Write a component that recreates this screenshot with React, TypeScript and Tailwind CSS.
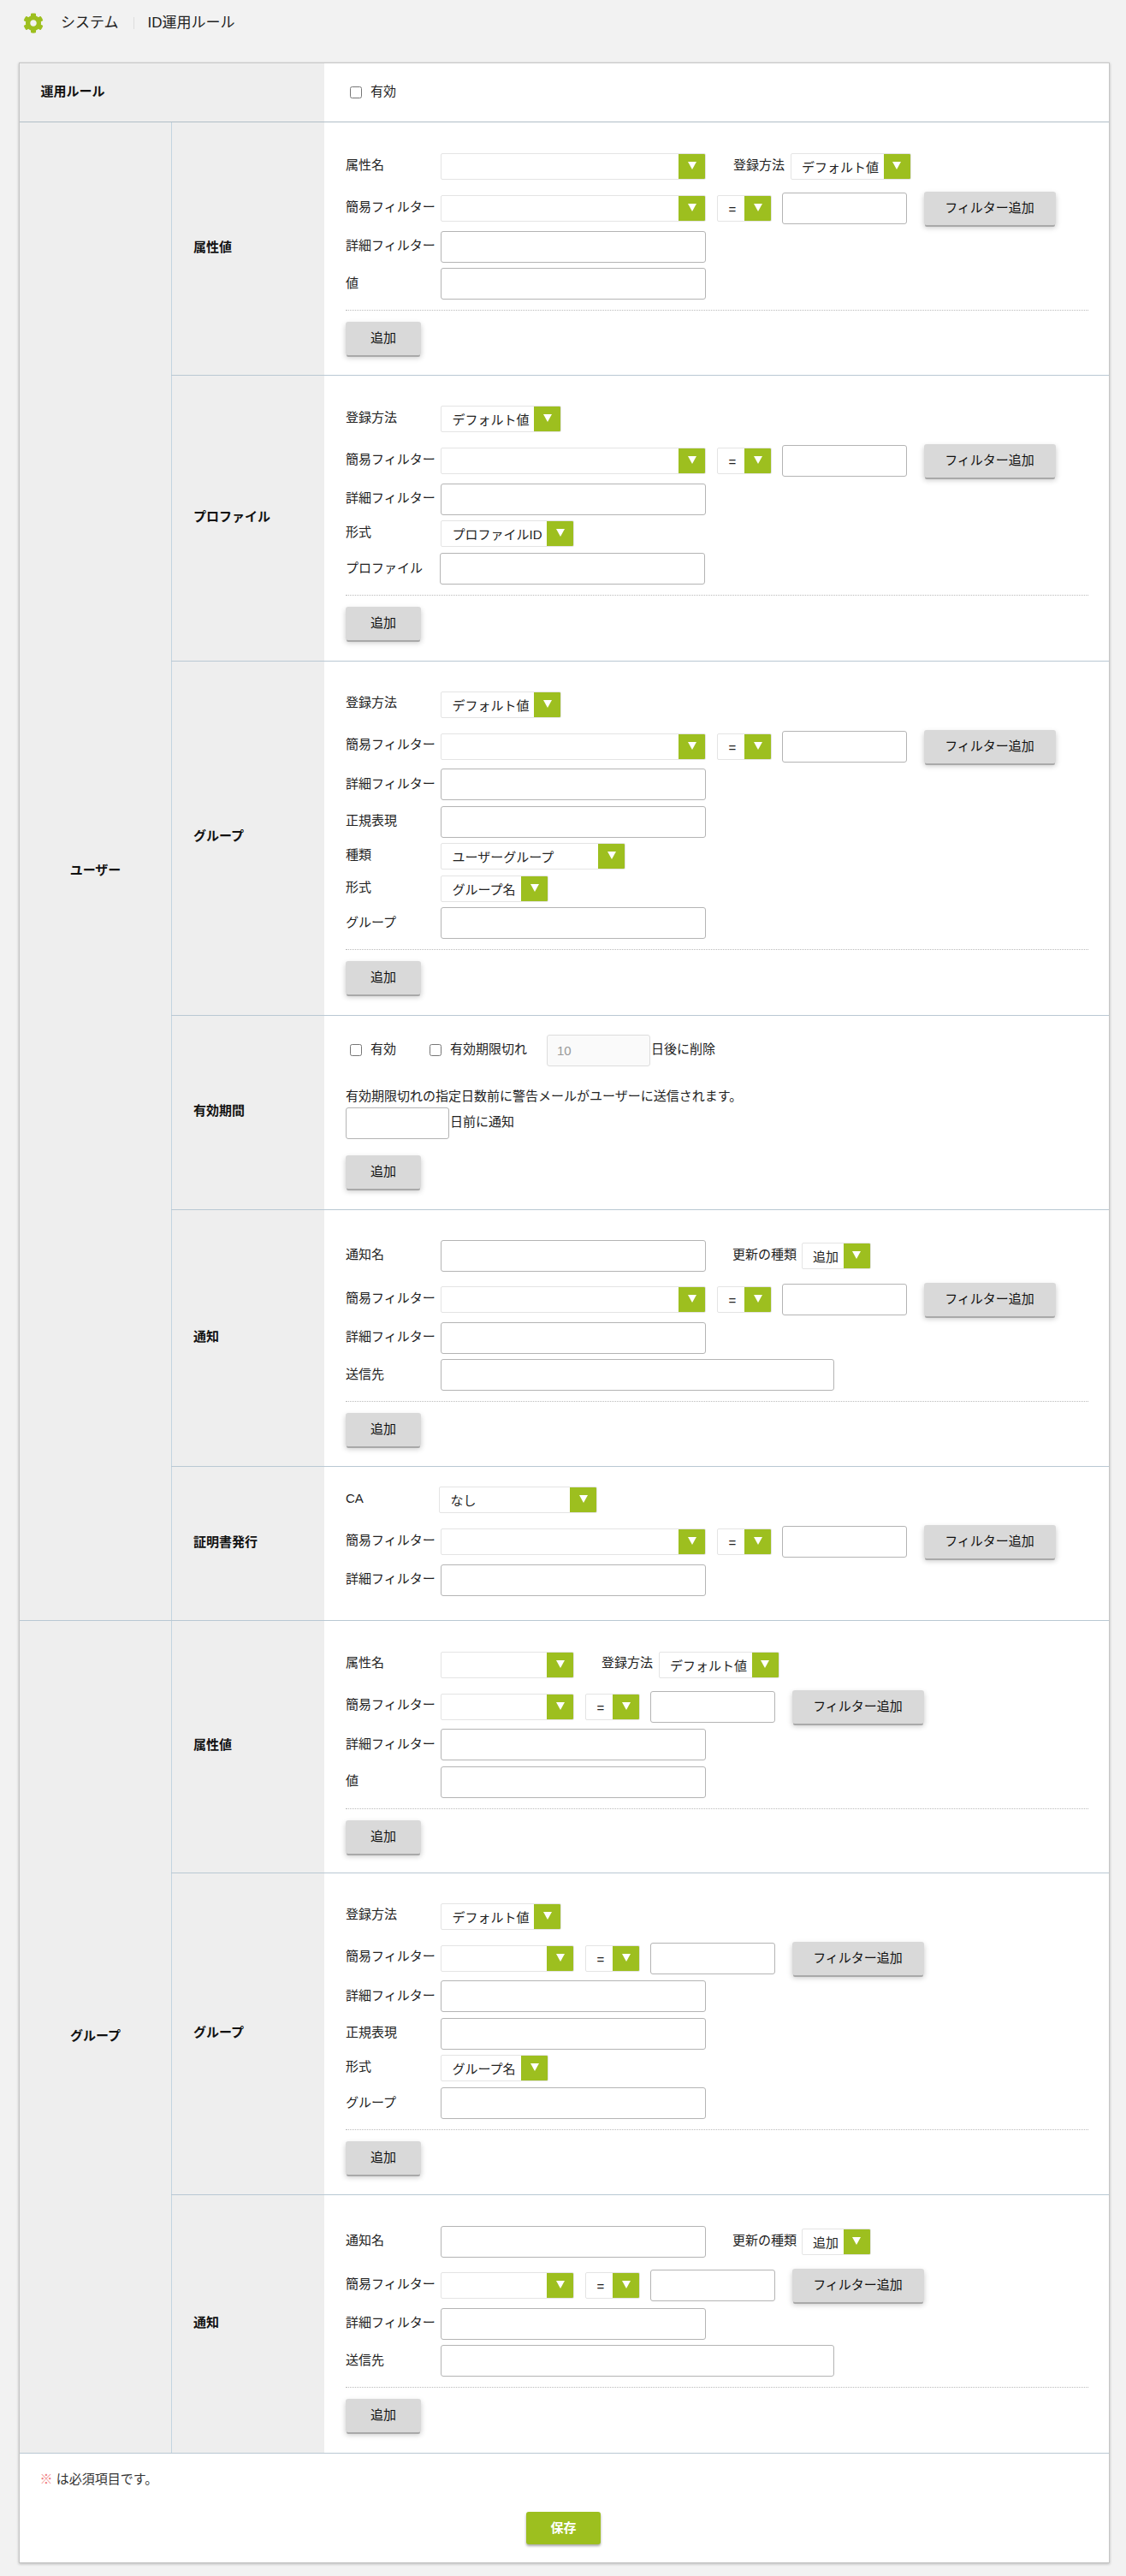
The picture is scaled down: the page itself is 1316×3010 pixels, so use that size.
import React from 'react';
import { FaCog } from 'react-icons/fa';

const inputClass = 'h-[37px] border border-[#b4b4b4] rounded-[3px] bg-white px-2 text-[15px] outline-none';

const Select: React.FC<{ className: string; text?: string }> = ({ className, text }) => (
  <div className={`flex h-[31px] shrink-0 overflow-hidden rounded-[2px] border border-[#e4e4e4] bg-white ${className}`}>
    <span className="flex-1 pl-[12.5px] pt-[1px] text-[15px] leading-[29px] whitespace-nowrap text-[#222]">{text}</span>
    <span className="flex w-[31px] shrink-0 justify-center bg-[#9dbf1f] pt-[9px]">
      <svg width="10" height="9" viewBox="0 0 10 9">
        <polygon points="0,0 10,0 5,9" fill="#fff" />
      </svg>
    </span>
  </div>
);

const GrayButton: React.FC<{ className?: string; children: React.ReactNode }> = ({ className = 'w-[88px]', children }) => (
  <button
    type="button"
    className={`h-[39px] shrink-0 rounded-[3px] bg-[#d9d9d9] text-center text-[15px] text-[#111] shadow-[0_3px_0_-1px_#a9a9a9,0_3px_6px_rgba(0,0,0,0.22)] ${className}`}
  >
    {children}
  </button>
);

const Row: React.FC<{
  label: string;
  className?: string;
  labelClass?: string;
  labelPad?: string;
  children: React.ReactNode;
}> = ({ label, className = '', labelClass = 'w-[111px]', labelPad = 'pb-[3px]', children }) => (
  <div className={`flex items-center ${className}`}>
    <span className={`shrink-0 text-[15px] whitespace-nowrap text-[#222] ${labelPad} ${labelClass}`}>{label}</span>
    {children}
  </div>
);

const TextRow: React.FC<{ label: string; className?: string; labelClass?: string; inputWidth?: string }> = ({
  label,
  className = 'mb-[6.5px]',
  labelClass,
  inputWidth = 'w-[310px]',
}) => (
  <Row label={label} className={className} labelClass={labelClass} labelPad="pb-[1px]">
    <input className={`${inputClass} ${inputWidth}`} />
  </Row>
);

const FilterRow: React.FC<{ narrow?: boolean }> = ({ narrow }) => (
  <Row label="簡易フィルター" className="mb-[7.5px] h-[37px]">
    <Select className={narrow ? 'w-[156px]' : 'w-[310px]'} />
    <Select className="ml-[13px] w-[64px]" text="=" />
    <input className={`${inputClass} ml-[12px] w-[146px]`} />
    <GrayButton className="ml-[19.5px] w-[154px]">フィルター追加</GrayButton>
  </Row>
);

const AddFooter: React.FC = () => (
  <>
    <div className="mt-[12px] mb-[13px] border-t border-dotted border-[#bbbbbb]" />
    <GrayButton>追加</GrayButton>
  </>
);

const SubRow: React.FC<{ label: string; first?: boolean; className: string; children: React.ReactNode }> = ({
  label,
  first,
  className,
  children,
}) => (
  <div className={`flex ${first ? '' : 'border-t border-[#b9c8d3]'}`}>
    <div className="flex w-[179px] shrink-0 items-center border-l border-[#c3d4e0] bg-[#eeeeee] pb-[3px] pl-[25px] text-[15px] font-bold text-[#111]">
      {label}
    </div>
    <div className={`min-w-0 flex-1 bg-white pr-[24px] pl-[25px] ${className}`}>{children}</div>
  </div>
);

const Check: React.FC<{ label: string; className?: string }> = ({ label, className = '' }) => (
  <label className={`flex items-center text-[15px] text-[#222] ${className}`}>
    <input type="checkbox" className="mr-[10px] h-[14px] w-[14px]" />
    <span className="pb-[2px]">{label}</span>
  </label>
);

const Attribute: React.FC<{ narrow?: boolean }> = ({ narrow }) => (
  <>
    <Row label="属性名" className="mb-[15px]">
      <Select className={narrow ? 'w-[156px]' : 'w-[310px]'} />
      <span className="ml-[32px] w-[60px] shrink-0 pb-[3px] text-[15px] whitespace-nowrap text-[#222]">登録方法</span>
      <Select className="ml-[6.5px] w-[141px]" text="デフォルト値" />
    </Row>
    <FilterRow narrow={narrow} />
    <TextRow label="詳細フィルター" />
    <TextRow label="値" className="" />
    <AddFooter />
  </>
);

const Notice: React.FC<{ narrow?: boolean }> = ({ narrow }) => (
  <>
    <Row label="通知名" className="mb-[14px]">
      <input className={`${inputClass} w-[310px]`} />
      <span className="ml-[31px] w-[74px] shrink-0 pb-[3px] text-[15px] whitespace-nowrap text-[#222]">更新の種類</span>
      <Select className="ml-[6.5px] w-[81px]" text="追加" />
    </Row>
    <FilterRow narrow={narrow} />
    <TextRow label="詳細フィルター" />
    <TextRow label="送信先" className="" inputWidth="w-[460px]" />
    <AddFooter />
  </>
);

export default function App() {
  return (
    <div className="min-h-[3010px] bg-[#f2f2f2] pb-[16px] font-['Liberation_Sans','Noto_Sans_CJK_JP',sans-serif]">
      {/* Page Header */}
      <div className="flex h-[73px] items-start pt-[15px] pl-[27px] text-[17px] text-[#222]">
        <FaCog className="h-[24px] w-[24px] text-[#9dbf1f]" />
        <span className="ml-[20px] leading-[24px]">システム</span>
        <span className="mt-[5px] ml-[17px] h-[14px] border-l border-[#dddddd]" />
        <span className="ml-[16px] leading-[24px]">ID運用ルール</span>
      </div>

      <div className="mx-[22px] w-[1275px] border border-[#c6c6c6] bg-white shadow-[0_1px_3px_rgba(0,0,0,0.25)]">
        {/* 運用ルール */}
        <div className="flex h-[69px] border-b border-[#b0bec7]">
          <div className="flex w-[356px] items-center bg-[#eeeeee] pb-[2px] pl-[24.5px] text-[15px] font-bold text-[#111]">
            運用ルール
          </div>
          <div className="flex items-center pl-[30px]">
            <Check label="有効" />
          </div>
        </div>

        {/* ユーザー */}
        <div className="flex">
          <div className="flex w-[177px] shrink-0 items-center justify-center bg-[#eeeeee] pb-[2px] text-[15px] font-bold text-[#111]">
            ユーザー
          </div>
          <div className="min-w-0 flex-1">
            <SubRow label="属性値" first className="pt-[36px] pb-[23px]">
              <Attribute />
            </SubRow>

            <SubRow label="プロファイル" className="pt-[35px] pb-[23.5px]">
              <Row label="登録方法" className="mb-[15px]">
                <Select className="w-[141px]" text="デフォルト値" />
              </Row>
              <FilterRow />
              <TextRow label="詳細フィルター" />
              <Row label="形式" className="mb-[7px]">
                <Select className="w-[156px]" text="プロファイルID" />
              </Row>
              <TextRow label="プロファイル" className="" labelClass="w-[110px]" />
              <AddFooter />
            </SubRow>

            <SubRow label="グループ" className="pt-[35px] pb-[23.5px]">
              <Row label="登録方法" className="mb-[15px]">
                <Select className="w-[141px]" text="デフォルト値" />
              </Row>
              <FilterRow />
              <TextRow label="詳細フィルター" />
              <TextRow label="正規表現" />
              <Row label="種類" className="mb-[7px]">
                <Select className="w-[216px]" text="ユーザーグループ" />
              </Row>
              <Row label="形式" className="mb-[6px]">
                <Select className="w-[126px]" text="グループ名" />
              </Row>
              <TextRow label="グループ" className="" />
              <AddFooter />
            </SubRow>

            <SubRow label="有効期間" className="pt-[22px] pb-[24.5px]">
              <div className="flex h-[37px] items-center text-[15px] text-[#222]">
                <Check label="有効" className="ml-[5px]" />
                <Check label="有効期限切れ" className="ml-[39px]" />
                <input
                  disabled
                  defaultValue="10"
                  className="ml-[23px] h-[37px] w-[121px] rounded-[3px] border border-[#dddddd] bg-[#fafafa] px-[11px] text-[15px] text-[#999999]"
                />
                <span className="ml-[1px] pb-[2px]">日後に削除</span>
              </div>
              <p className="mt-[24px] text-[15px] leading-[22px] text-[#222]">
                有効期限切れの指定日数前に警告メールがユーザーに送信されます。
              </p>
              <div className="mt-[2px] flex items-center text-[15px] text-[#222]">
                <input className={`${inputClass} w-[121px]`} />
                <span className="ml-[1px] pb-[2px]">日前に通知</span>
              </div>
              <div className="mt-[19px]">
                <GrayButton>追加</GrayButton>
              </div>
            </SubRow>

            <SubRow label="通知" className="pt-[35px] pb-[23px]">
              <Notice />
            </SubRow>

            <SubRow label="証明書発行" className="pt-[23px] pb-[28px]">
              <Row label="CA" className="mb-[15px]" labelClass="w-[109px]">
                <Select className="w-[185px]" text="なし" />
              </Row>
              <FilterRow />
              <TextRow label="詳細フィルター" className="" />
            </SubRow>
          </div>
        </div>

        {/* グループ */}
        <div className="flex border-t border-[#b9c8d3]">
          <div className="flex w-[177px] shrink-0 items-center justify-center bg-[#eeeeee] pb-[2px] text-[15px] font-bold text-[#111]">
            グループ
          </div>
          <div className="min-w-0 flex-1">
            <SubRow label="属性値" first className="pt-[36px] pb-[22px]">
              <Attribute narrow />
            </SubRow>

            <SubRow label="グループ" className="pt-[35px] pb-[23px]">
              <Row label="登録方法" className="mb-[15px]">
                <Select className="w-[141px]" text="デフォルト値" />
              </Row>
              <FilterRow narrow />
              <TextRow label="詳細フィルター" />
              <TextRow label="正規表現" />
              <Row label="形式" className="mb-[7px]">
                <Select className="w-[126px]" text="グループ名" />
              </Row>
              <TextRow label="グループ" className="" />
              <AddFooter />
            </SubRow>

            <SubRow label="通知" className="pt-[36px] pb-[24px]">
              <Notice narrow />
            </SubRow>
          </div>
        </div>

        {/* Footer */}
        <div className="border-t border-[#b9c8d3] pt-[20px] pb-[21px]">
          <p className="pl-[23.5px] text-[15px] leading-[20px] text-[#333333]">
            <span className="text-[#f08080]">※</span> は必須項目です。
          </p>
          <div className="mt-[28px] flex justify-center pr-[2px]">
            <button
              type="button"
              className="h-[38px] w-[87px] rounded-[3px] bg-[#9dbf1f] text-[15px] font-bold text-white shadow-[0_2px_3px_rgba(0,0,0,0.35)]"
            >
              保存
            </button>
          </div>
        </div>
      </div>
    </div>
  );
}
